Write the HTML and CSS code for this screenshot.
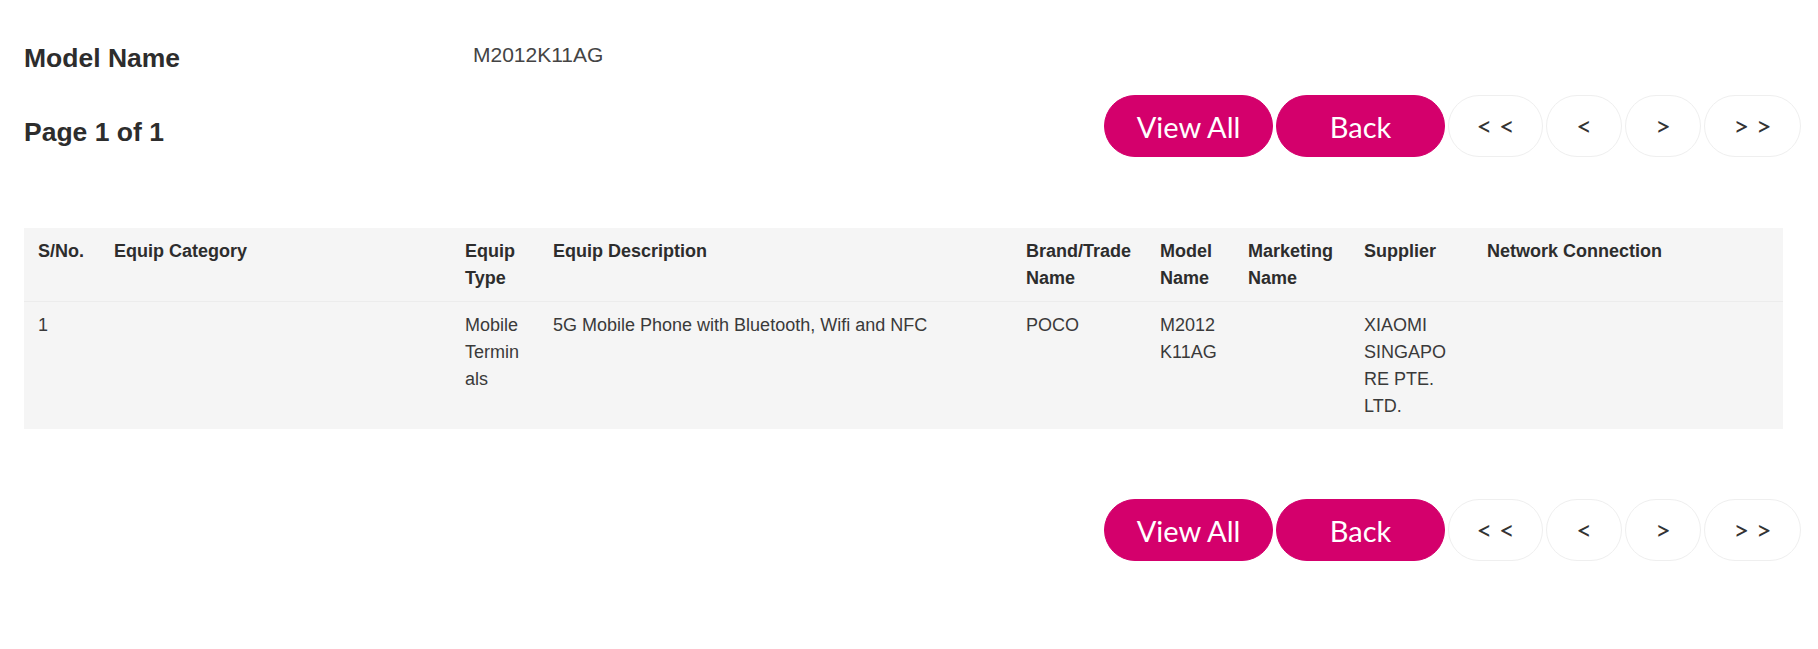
FILE: index.html
```html
<!DOCTYPE html>
<html lang="en">
<head>
<meta charset="utf-8">
<title>Equipment Details</title>
<link rel="stylesheet" href="styles.css">
</head>
<body>
<div class="page">
  <div class="info-row">
    <h2 class="info-label">Model Name</h2>
    <div class="info-value">M2012K11AG</div>
  </div>

  <div class="toolbar">
    <h2 class="page-count">Page 1 of 1</h2>
    <div class="actions">
      <button class="btn btn-pink">View All</button>
      <button class="btn btn-pink">Back</button>
      <button class="btn btn-pager btn-wide">&lt; &lt;</button>
      <button class="btn btn-pager btn-narrow">&lt;</button>
      <button class="btn btn-pager btn-narrow">&gt;</button>
      <button class="btn btn-pager btn-wide2">&gt; &gt;</button>
    </div>
  </div>

  <table class="results">
    <colgroup>
      <col class="c-sno">
      <col class="c-cat">
      <col class="c-type">
      <col class="c-desc">
      <col class="c-brand">
      <col class="c-model">
      <col class="c-mkt">
      <col class="c-sup">
      <col class="c-net">
    </colgroup>
    <thead>
      <tr>
        <th>S/No.</th>
        <th>Equip Category</th>
        <th>Equip Type</th>
        <th>Equip Description</th>
        <th>Brand/Trade Name</th>
        <th>Model Name</th>
        <th>Marketing Name</th>
        <th>Supplier</th>
        <th>Network Connection</th>
      </tr>
    </thead>
    <tbody>
      <tr>
        <td>1</td>
        <td></td>
        <td>Mobile Terminals</td>
        <td>5G Mobile Phone with Bluetooth, Wifi and NFC</td>
        <td>POCO</td>
        <td>M2012K11AG</td>
        <td></td>
        <td>XIAOMI SINGAPORE PTE. LTD.</td>
        <td></td>
      </tr>
    </tbody>
  </table>

  <div class="bottom-bar">
    <div class="actions">
      <button class="btn btn-pink">View All</button>
      <button class="btn btn-pink">Back</button>
      <button class="btn btn-pager btn-wide">&lt; &lt;</button>
      <button class="btn btn-pager btn-narrow">&lt;</button>
      <button class="btn btn-pager btn-narrow">&gt;</button>
      <button class="btn btn-pager btn-wide2">&gt; &gt;</button>
    </div>
  </div>
</div>
</body>
</html>
```

FILE: styles.css
```css
* {
  box-sizing: border-box;
}

html, body {
  margin: 0;
  padding: 0;
  background: #ffffff;
}

body {
  font-family: "Liberation Sans", Arial, sans-serif;
  color: #333333;
}

.page {
  padding: 40px 17px 40px 24px;
}

.info-row {
  display: flex;
  align-items: flex-start;
}

.info-label {
  width: 449px;
  margin: 3px 0 0 0;
  font-size: 26.5px;
  line-height: 30px;
  font-weight: bold;
  color: #2d2d2d;
}

.info-value {
  font-size: 21px;
  line-height: 30px;
  color: #444444;
}

.toolbar {
  display: flex;
  justify-content: space-between;
  align-items: center;
  margin-top: 22px;
}

.page-count {
  margin: 0;
  padding-top: 12px;
  font-size: 26.5px;
  line-height: 30px;
  font-weight: bold;
  color: #2d2d2d;
}

.actions {
  display: flex;
  gap: 3px;
}

.btn {
  height: 62px;
  display: inline-flex;
  align-items: center;
  justify-content: center;
  padding: 0;
  border-radius: 31px;
  font-family: Lato, "Open Sans", sans-serif;
  cursor: pointer;
}

.btn-pink {
  width: 169px;
  background: #d4006c;
  border: 1px solid #d4006c;
  color: #ffffff;
  font-size: 29px;
}

.btn-pager {
  background: #ffffff;
  border: 1px solid #efefef;
  color: #333333;
  font-size: 27px;
  padding-bottom: 2px;
}

.btn-wide {
  width: 95px;
}

.btn-narrow {
  width: 76px;
}

.btn-wide2 {
  width: 97px;
}

.results {
  margin-top: 71px;
  width: 1759px;
  table-layout: fixed;
  border-collapse: collapse;
  background: #f5f5f5;
  font-size: 18px;
  line-height: 27px;
}

.c-sno { width: 76px; }
.c-cat { width: 351px; }
.c-type { width: 88px; }
.c-desc { width: 473px; }
.c-brand { width: 134px; }
.c-model { width: 88px; }
.c-mkt { width: 116px; }
.c-sup { width: 123px; }
.c-net { width: 310px; }

.results th,
.results td {
  padding: 10px 15px 9px 14px;
  text-align: left;
  vertical-align: top;
  overflow-wrap: anywhere;
}

.results th {
  font-weight: bold;
  color: #2d2d2d;
  overflow-wrap: normal;
}

.results td {
  color: #3a3a3a;
  border-top: 1px solid #ececec;
}

.bottom-bar {
  display: flex;
  justify-content: flex-end;
  margin-top: 70px;
}
```
